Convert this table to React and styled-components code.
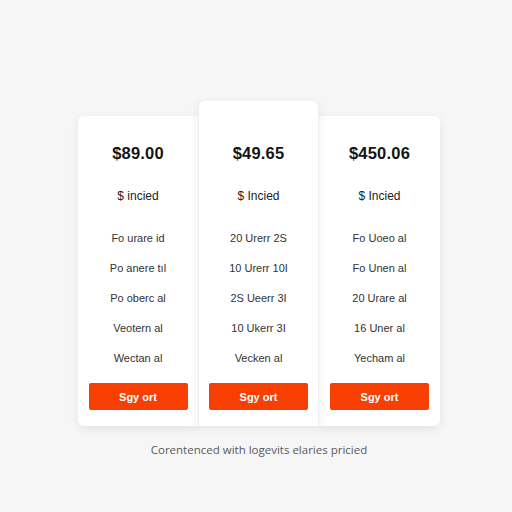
import React from 'react';
import styled, { createGlobalStyle } from 'styled-components';

const GlobalStyle = createGlobalStyle`
  body {
    margin: 0;
    background: #f6f6f6;
    font-family: "Liberation Sans", Arial, sans-serif;
  }
`;

const Page = styled.div`
  width: 512px;
  height: 512px;
  box-sizing: border-box;
  padding: 101px 0 0 6px;
  display: flex;
  flex-direction: column;
  align-items: center;
  background: #f6f6f6;
`;

const Plans = styled.div`
  display: flex;
  align-items: flex-end;
`;

const Card = styled.div`
  width: ${p => p.$width}px;
  box-sizing: border-box;
  padding: ${p => (p.$featured ? 42 : 27)}px 10px 16px;
  background: #fff;
  display: flex;
  flex-direction: column;
  align-items: center;
  border-radius: ${p => p.$radius};
  box-shadow: ${p =>
    p.$featured
      ? '0 2px 10px rgba(0,0,0,0.07)'
      : '0 3px 10px rgba(0,0,0,0.08)'};
  position: relative;
  z-index: ${p => (p.$featured ? 2 : 1)};
  border-left: ${p => (p.$featured ? '1px solid #efefef' : 'none')};
  border-right: ${p => (p.$featured ? '1px solid #efefef' : 'none')};
`;

const Price = styled.div`
  font-size: 16.5px;
  line-height: 20px;
  font-weight: 700;
  color: #151515;
  letter-spacing: 0.2px;
`;

const Label = styled.div`
  margin-top: 25px;
  font-size: 12px;
  line-height: 16px;
  color: #222;
`;

const Features = styled.ul`
  list-style: none;
  margin: 19px 0 0;
  padding: 0;
  width: 100%;
`;

const Feature = styled.li`
  height: 30px;
  display: flex;
  align-items: center;
  justify-content: center;
  font-size: 11px;
  color: #333;
`;

const Button = styled.button`
  margin-top: 10px;
  width: 99px;
  height: 27px;
  border: none;
  border-radius: 2px;
  background: #f73f03;
  color: #fff;
  font-family: "Liberation Sans", Arial, sans-serif;
  font-size: 11px;
  font-weight: 700;
  cursor: pointer;
`;

const Footnote = styled.p`
  margin: 16px 0 0;
  font-size: 11.5px;
  line-height: 16px;
  color: #5a5a5a;
  font-family: "Open Sans", "Liberation Sans", sans-serif;
`;

const plans = [
  {
    price: '$89.00',
    label: '$ incied',
    width: 120,
    radius: '6px 0 0 6px',
    features: ['Fo urare id', 'Po anere tıl', 'Po oberc al', 'Veotern al', 'Wectan al'],
  },
  {
    price: '$49.65',
    label: '$ Incied',
    width: 121,
    radius: '6px 6px 0 0',
    featured: true,
    features: ['20 Urerr 2S', '10 Urerr 10I', '2S Ueerr 3I', '10 Ukerr 3I', 'Vecken al'],
  },
  {
    price: '$450.06',
    label: '$ Incied',
    width: 121,
    radius: '0 6px 6px 0',
    features: ['Fo Uoeo al', 'Fo Unen al', '20 Urare al', '16 Uner al', 'Yecham al'],
  },
];

export default function App() {
  return (
    <Page>
      <GlobalStyle />
      <Plans>
        {plans.map(plan => (
          <Card
            key={plan.price}
            $width={plan.width}
            $radius={plan.radius}
            $featured={plan.featured}
          >
            <Price>{plan.price}</Price>
            <Label>{plan.label}</Label>
            <Features>
              {plan.features.map(f => (
                <Feature key={f}>{f}</Feature>
              ))}
            </Features>
            <Button>Sgy ort</Button>
          </Card>
        ))}
      </Plans>
      <Footnote>Corentenced with logevits elaries pricied</Footnote>
    </Page>
  );
}
